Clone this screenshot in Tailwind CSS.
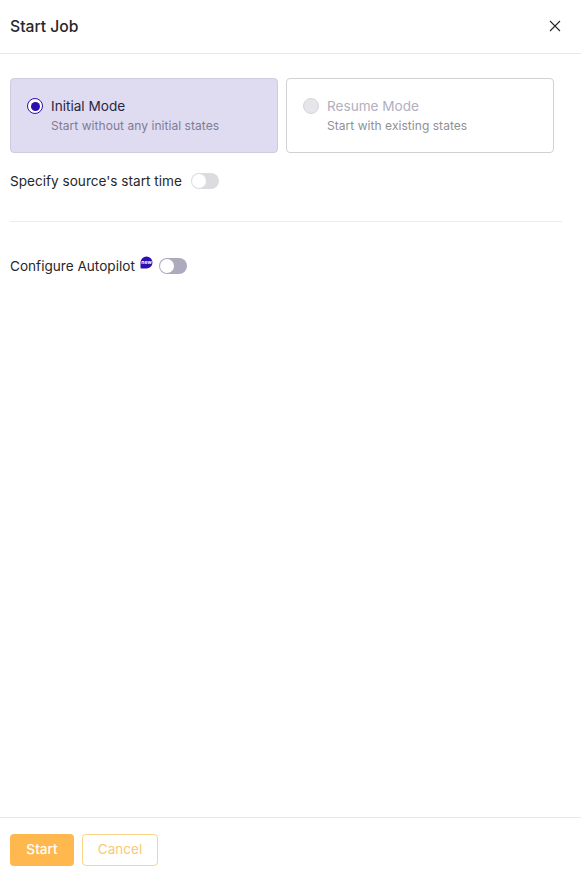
<!DOCTYPE html>
<html>
<head>
    <title>Start Job</title>
    <script src="https://cdn.jsdelivr.net/npm/@tailwindcss/browser@4"></script>
</head>
<body class="bg-white font-['Inter',sans-serif] text-[#27272a]">
    <div class="flex flex-col h-[879px] w-[581px]">
        <!-- header -->
        <div class="flex items-center justify-between h-[54px] pl-[10px] pr-[20px] border-b border-[#e8e8ea]">
            <h1 class="text-[15.7px] font-medium">Start Job</h1>
            <svg class="w-[12px] h-[12px] mb-[2px]" viewBox="0 0 12 12" fill="none" stroke="#27272a" stroke-width="1.1"><path d="M1 1l10 10M11 1L1 11"/></svg>
        </div>

        <!-- body -->
        <div class="flex-1 pt-[24px] pl-[10px] pr-[19px]">
            <div class="flex gap-[8px]">
                <div class="flex w-[268px] h-[75px] rounded-[4px] border border-[#cfcbe0] bg-[#dfdbf0] pl-[16px] pt-[18px]">
                    <div class="flex items-center justify-center w-[16px] h-[16px] mt-[1px] rounded-full border-[1.5px] border-[#2e0fb0] bg-white">
                        <div class="w-[9px] h-[9px] rounded-full bg-[#2e0fb0]"></div>
                    </div>
                    <div class="ml-[8px]">
                        <div class="text-[13.6px] leading-[18px] text-[#2a2740]">Initial Mode</div>
                        <div class="text-[12px] tracking-[0.05px] leading-[16px] mt-[3px] text-[#7f7c94]">Start without any initial states</div>
                    </div>
                </div>
                <div class="flex w-[268px] h-[75px] rounded-[4px] border border-[#d1d1d4] bg-white pl-[16px] pt-[18px]">
                    <div class="w-[16px] h-[16px] mt-[1px] rounded-full border border-[#d6d6da] bg-[#e6e6ea]"></div>
                    <div class="ml-[8px]">
                        <div class="text-[13.6px] leading-[18px] text-[#b1afc0]">Resume Mode</div>
                        <div class="text-[12px] tracking-[0.05px] leading-[16px] mt-[3px] text-[#8f8f96]">Start with existing states</div>
                    </div>
                </div>
            </div>

            <div class="flex items-center mt-[18px] h-[20px]">
                <span class="text-[13.6px]">Specify source's start time</span>
                <div class="flex items-center w-[28px] h-[16px] ml-[9px] rounded-full bg-[#dcdce0] pl-[1px]">
                    <div class="w-[14px] h-[14px] rounded-full bg-white"></div>
                </div>
            </div>

            <div class="mt-[30px] w-[552px] border-t border-[#ececee]"></div>

            <div class="flex items-center mt-[34px] h-[20px]">
                <span class="text-[13.6px]">Configure Autopilot</span>
                <svg class="w-[13px] h-[13px] ml-[5px] mb-[7px]" viewBox="0 0 13 13">
                    <path d="M6.5.5a6 6 0 0 1 6 6 6 6 0 0 1-6 6H1.5c-.6 0-1-.4-1-1V6.500a6 6 0 0 1 6-6z" fill="#2e0fb0"/>
                    <text x="6.500" y="8" text-anchor="middle" font-size="5" font-weight="700" fill="#fff" font-family="Inter, sans-serif">new</text>
                </svg>
                <div class="flex items-center w-[28px] h-[16px] ml-[6px] rounded-full bg-[#aeaabd] pl-[1px]">
                    <div class="w-[14px] h-[14px] rounded-full bg-white"></div>
                </div>
            </div>
        </div>

        <!-- footer -->
        <div class="flex items-center gap-[8px] h-[62px] pl-[10px] pt-[2px] border-t border-[#e8e8ea]">
            <button class="w-[64px] h-[32px] rounded-[4px] bg-[#ffb84d] text-[13.6px] font-medium text-white">Start</button>
            <button class="w-[76px] h-[32px] rounded-[4px] border border-[#fad48a] bg-white text-[13.6px] text-[#f8ca74]">Cancel</button>
        </div>
    </div>
</body>
</html>
